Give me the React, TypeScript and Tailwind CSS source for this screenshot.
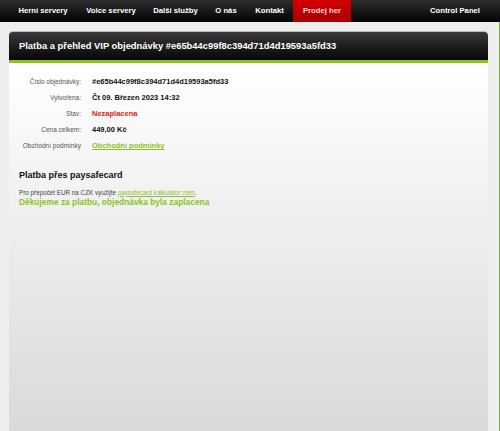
import React from "react";

const font = { fontFamily: '"Liberation Sans", Arial, sans-serif' };

export default function App() {
  const nav: { t: string; w: string }[] = [
    { t: "Herní servery", w: "w-[68px]" },
    { t: "Voice servery", w: "w-[68px]" },
    { t: "Další služby", w: "w-[61px]" },
    { t: "O nás", w: "w-[40px]" },
    { t: "Kontakt", w: "w-[47px]" },
  ];
  const rows: { label: string; value: React.ReactNode }[] = [
    { label: "Číslo objednávky:", value: <span className="font-bold text-[#111]">#e65b44c99f8c394d71d4d19593a5fd33</span> },
    { label: "Vytvořena:", value: <span className="font-bold text-[#111]">Čt 09. Březen 2023 14:32</span> },
    { label: "Stav:", value: <span className="font-bold text-[#d22]">Nezaplacena</span> },
    { label: "Cena celkem:", value: <span className="font-bold text-[#111]">449,00 Kč</span> },
    { label: "Obchodní podmínky", value: <span className="font-bold text-[#8cc31e] underline">Obchodní podmínky</span> },
  ];
  return (
    <div style={font} className="w-[500px] h-[431px] bg-[#eeeeee] overflow-hidden flex flex-col">
      <div className="h-[22px] bg-gradient-to-b from-[#2e2e2e] to-[#050505] flex items-stretch text-white font-bold text-[7.7px]">
        <div className="flex items-stretch pl-[9px]">
          {nav.map((n) => (
            <div key={n.t} className={`flex items-center justify-center ${n.w}`}>{n.t}</div>
          ))}
          <div className="flex items-center justify-center w-[58px] bg-gradient-to-b from-[#d40000] to-[#a80000] text-[#ffd6d6]">Prodej her</div>
        </div>
        <div className="flex-1" />
        <div className="flex items-center pr-[20px]">Control Panel</div>
      </div>
      <div className="flex-1 flex border-r border-[#6cc11c]">
        <div className="ml-[9px] mt-[10px] w-[479px] flex flex-col">
          <div className="h-[28px] rounded-t-[4px] bg-gradient-to-b from-[#3a3a3a] to-[#070707] flex items-center pl-[10px] text-white font-bold text-[9.4px] shadow-[0_-1px_0_#bbb]">
            Platba a přehled VIP objednávky #e65b44c99f8c394d71d4d19593a5fd33
          </div>
          <div className="h-[3px] bg-[#8cc31e]" />
          <div className="flex-1 bg-gradient-to-b from-[#ffffff] to-[#d9d9d9] pt-[11px] pl-[10px]">
            <div className="flex flex-col">
              {rows.map((r) => (
                <div key={r.label} className="flex items-center h-[16px]">
                  <div className="w-[62px] text-right text-[6.5px] text-[#555]">{r.label}</div>
                  <div className="ml-[11px] text-[7.5px]">{r.value}</div>
                </div>
              ))}
            </div>
            <div className="mt-[15px] font-bold text-[9px] text-[#111]">Platba přes paysafecard</div>
            <div className="mt-[5px] text-[6.3px] text-[#444]">
              Pro přepočet EUR na CZK využijte <span className="text-[#8cc31e] underline">paysafecard kalkulátor měn</span>.
            </div>
            <div className="font-bold text-[8.4px] text-[#8cc31e] leading-[10px]">Děkujeme za platbu, objednávka byla zaplacena</div>
          </div>
        </div>
      </div>
    </div>
  );
}
